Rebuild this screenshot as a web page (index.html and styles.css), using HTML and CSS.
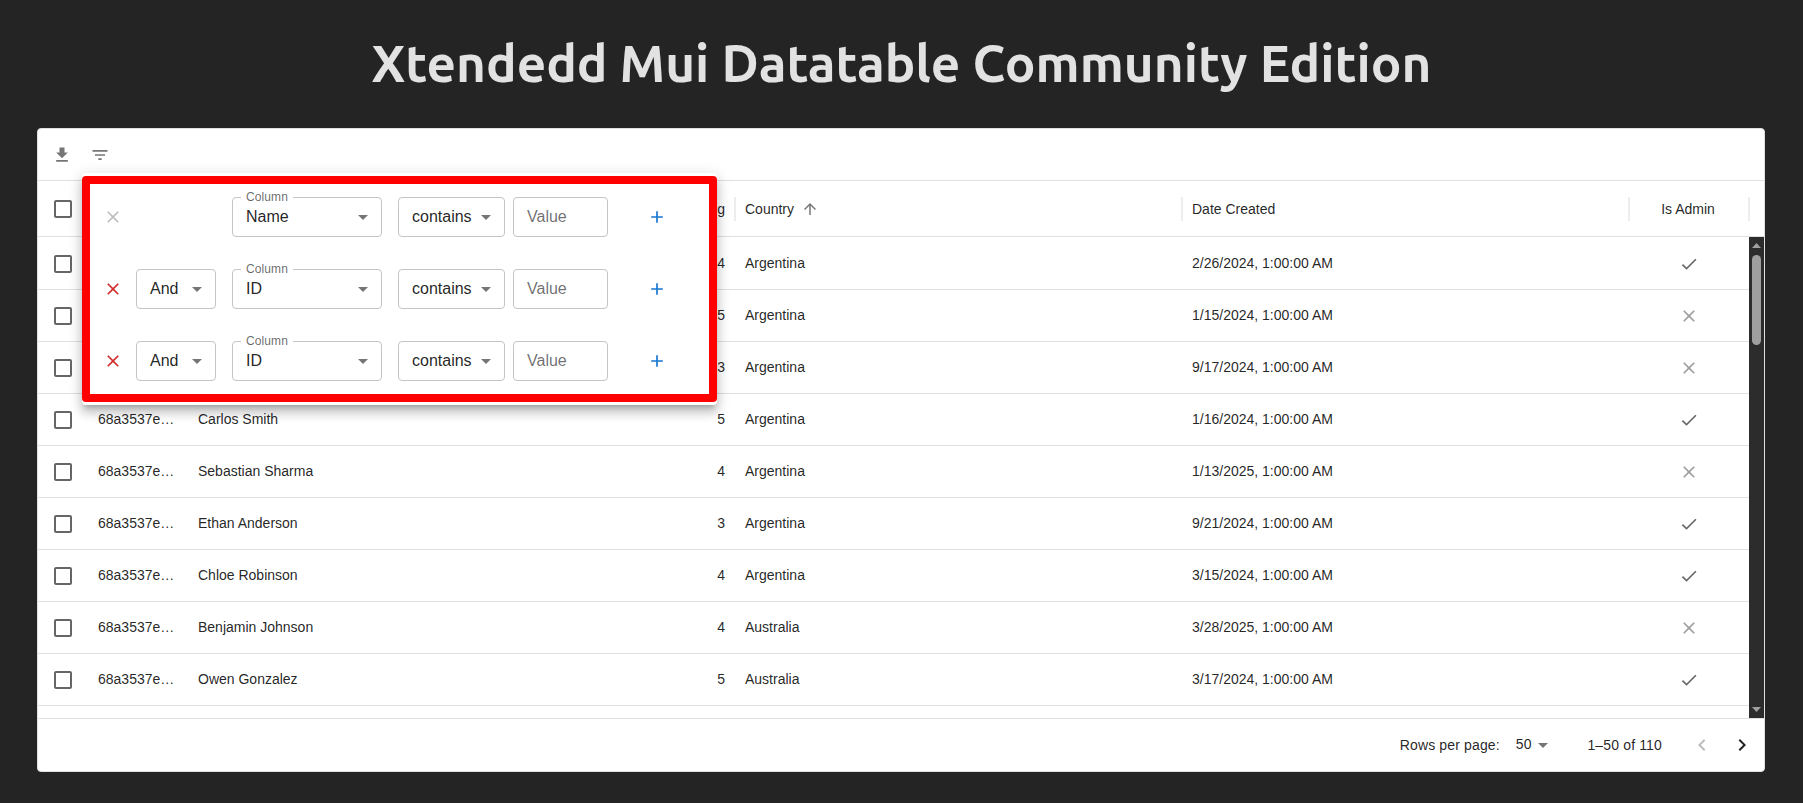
FILE: index.html
```html
<!DOCTYPE html>
<html lang="en">
<head>
<meta charset="utf-8">
<title>Xtendedd Mui Datatable</title>
<link rel="stylesheet" href="styles.css">
</head>
<body>
<svg class="defs" aria-hidden="true">
  <symbol id="box" viewBox="0 0 24 24"><path d="M19 5v14H5V5h14m0-2H5c-1.1 0-2 .9-2 2v14c0 1.1.9 2 2 2h14c1.1 0 2-.9 2-2V5c0-1.1-.9-2-2-2z"/></symbol>
  <symbol id="close" viewBox="0 0 24 24"><path d="M19 6.41L17.59 5 12 10.59 6.41 5 5 6.41 10.59 12 5 17.59 6.41 19 12 13.41 17.59 19 19 17.59 13.41 12z"/></symbol>
  <symbol id="check" viewBox="0 0 24 24"><path d="M9 16.17L4.83 12l-1.42 1.41L9 19 21 7l-1.41-1.41z"/></symbol>
  <symbol id="plus" viewBox="0 0 24 24"><path d="M19 13h-6v6h-2v-6H5v-2h6V5h2v6h6v2z"/></symbol>
  <symbol id="caret" viewBox="0 0 24 24"><path d="M7 10l5 5 5-5z"/></symbol>
</svg>
<h1 class="title">Xtendedd Mui Datatable Community Edition</h1>
<main class="grid">
  <div class="toolbar">
    <svg class="icon" viewBox="0 0 24 24"><path d="M19 9h-4V3H9v6H5l7 7 7-7zM5 18v2h14v-2H5z"/></svg>
    <svg class="icon" viewBox="0 0 24 24"><path d="M10 18h4v-2h-4v2zM3 6v2h18V6H3zm3 7h12v-2H6v2z"/></svg>
  </div>
  <div class="row head">
    <div class="c-box"><svg><use href="#box"/></svg></div>
    <div class="c-id"></div><div class="c-name"></div><div class="c-num sep">g</div>
    <div class="c-country sep">Country<svg class="sort" viewBox="0 0 24 24"><path d="M4 12l1.41 1.41L11 7.83V20h2V7.83l5.58 5.59L20 12l-8-8-8 8z"/></svg></div>
    <div class="c-date sep">Date Created</div><div class="c-admin sep">Is Admin</div>
  </div>
  <div class="body">
    <div class="rows">
      <div class="row first"><div class="c-box"><svg><use href="#box"/></svg></div><div class="c-id"></div><div class="c-name"></div><div class="c-num">4</div><div class="c-country">Argentina</div><div class="c-date">2/26/2024, 1:00:00 AM</div><div class="c-admin"><svg class="yes"><use href="#check"/></svg></div></div>
      <div class="row"><div class="c-box"><svg><use href="#box"/></svg></div><div class="c-id"></div><div class="c-name"></div><div class="c-num">5</div><div class="c-country">Argentina</div><div class="c-date">1/15/2024, 1:00:00 AM</div><div class="c-admin"><svg class="no"><use href="#close"/></svg></div></div>
      <div class="row"><div class="c-box"><svg><use href="#box"/></svg></div><div class="c-id"></div><div class="c-name"></div><div class="c-num">3</div><div class="c-country">Argentina</div><div class="c-date">9/17/2024, 1:00:00 AM</div><div class="c-admin"><svg class="no"><use href="#close"/></svg></div></div>
      <div class="row"><div class="c-box"><svg><use href="#box"/></svg></div><div class="c-id">68a3537e…</div><div class="c-name">Carlos Smith</div><div class="c-num">5</div><div class="c-country">Argentina</div><div class="c-date">1/16/2024, 1:00:00 AM</div><div class="c-admin"><svg class="yes"><use href="#check"/></svg></div></div>
      <div class="row"><div class="c-box"><svg><use href="#box"/></svg></div><div class="c-id">68a3537e…</div><div class="c-name">Sebastian Sharma</div><div class="c-num">4</div><div class="c-country">Argentina</div><div class="c-date">1/13/2025, 1:00:00 AM</div><div class="c-admin"><svg class="no"><use href="#close"/></svg></div></div>
      <div class="row"><div class="c-box"><svg><use href="#box"/></svg></div><div class="c-id">68a3537e…</div><div class="c-name">Ethan Anderson</div><div class="c-num">3</div><div class="c-country">Argentina</div><div class="c-date">9/21/2024, 1:00:00 AM</div><div class="c-admin"><svg class="yes"><use href="#check"/></svg></div></div>
      <div class="row"><div class="c-box"><svg><use href="#box"/></svg></div><div class="c-id">68a3537e…</div><div class="c-name">Chloe Robinson</div><div class="c-num">4</div><div class="c-country">Argentina</div><div class="c-date">3/15/2024, 1:00:00 AM</div><div class="c-admin"><svg class="yes"><use href="#check"/></svg></div></div>
      <div class="row"><div class="c-box"><svg><use href="#box"/></svg></div><div class="c-id">68a3537e…</div><div class="c-name">Benjamin Johnson</div><div class="c-num">4</div><div class="c-country">Australia</div><div class="c-date">3/28/2025, 1:00:00 AM</div><div class="c-admin"><svg class="no"><use href="#close"/></svg></div></div>
      <div class="row"><div class="c-box"><svg><use href="#box"/></svg></div><div class="c-id">68a3537e…</div><div class="c-name">Owen Gonzalez</div><div class="c-num">5</div><div class="c-country">Australia</div><div class="c-date">3/17/2024, 1:00:00 AM</div><div class="c-admin"><svg class="yes"><use href="#check"/></svg></div></div>
    </div>
    <div class="scroll">
      <svg class="tri" viewBox="0 0 9 5"><path d="M0 5L4.5 0 9 5z"/></svg>
      <div class="thumb"></div>
      <svg class="tri end" viewBox="0 0 9 5"><path d="M0 0L4.5 5 9 0z"/></svg>
    </div>
  </div>
  <div class="footer">
    <span class="per">Rows per page:</span>
    <span class="size">50</span><svg class="caret"><use href="#caret"/></svg>
    <span class="range">1–50 of 110</span>
    <svg class="nav off" viewBox="0 0 24 24"><path d="M15.41 16.59L10.83 12l4.58-4.59L14 6l-6 6 6 6 1.41-1.41z"/></svg>
    <svg class="nav" viewBox="0 0 24 24"><path d="M8.59 16.59L13.17 12 8.59 7.41 10 6l6 6-6 6-1.41-1.41z"/></svg>
  </div>
  <section class="popover">
    <div class="filters">
      <div class="filter">
        <svg class="del off"><use href="#close"/></svg>
        <div class="field op hidden"></div>
        <div class="field col"><span class="label">Column</span>Name<svg><use href="#caret"/></svg></div>
        <div class="field cmp">contains<svg><use href="#caret"/></svg></div>
        <div class="field val">Value</div>
        <svg class="add"><use href="#plus"/></svg>
      </div>
      <div class="filter">
        <svg class="del"><use href="#close"/></svg>
        <div class="field op">And<svg><use href="#caret"/></svg></div>
        <div class="field col"><span class="label">Column</span>ID<svg><use href="#caret"/></svg></div>
        <div class="field cmp">contains<svg><use href="#caret"/></svg></div>
        <div class="field val">Value</div>
        <svg class="add"><use href="#plus"/></svg>
      </div>
      <div class="filter">
        <svg class="del"><use href="#close"/></svg>
        <div class="field op">And<svg><use href="#caret"/></svg></div>
        <div class="field col"><span class="label">Column</span>ID<svg><use href="#caret"/></svg></div>
        <div class="field cmp">contains<svg><use href="#caret"/></svg></div>
        <div class="field val">Value</div>
        <svg class="add"><use href="#plus"/></svg>
      </div>
    </div>
  </section>
</main>
</body>
</html>
```
FILE: styles.css
```css
* { box-sizing: border-box; }
body { margin: 0; height: 803px; overflow: hidden; background: #242424; font: 14px/20px "Liberation Sans", Arial, sans-serif; color: rgba(0,0,0,.87); }
svg { fill: currentColor; flex: none; display: block; }
.defs { width: 0; height: 0; position: absolute; }
.title { margin: 0; height: 128px; text-align: center; font: 600 51.2px/126px "Ubuntu", "Noto Sans", sans-serif; color: rgba(255,255,255,.87); white-space: nowrap; }
.grid { position: relative; width: 1728px; height: 644px; margin-left: 37px; background: #fff; border: 1px solid #e0e0e0; border-radius: 4px; display: flex; flex-direction: column; }
.toolbar { height: 52px; flex: none; display: flex; gap: 18px; align-items: center; padding: 0 14px; border-bottom: 1px solid #e0e0e0; color: rgba(0,0,0,.54); }
.icon { width: 20px; height: 20px; }
.row { display: flex; height: 52px; flex: none; border-bottom: 1px solid #e0e0e0; align-items: center; padding-bottom: 1px; }
.row > div { padding: 0 10px; white-space: nowrap; }
.row.first { height: 53px; padding-bottom: 0; }
.row.head { height: 56px; padding-bottom: 0; }
.row > .c-box { width: 50px; padding: 2px 0 0 13px; color: rgba(0,0,0,.6); }
.row.head > .c-box { padding-top: 1px; }
.c-box svg { width: 24px; height: 24px; }
.c-id { width: 100px; }
.c-name { width: 447px; }
.c-num { width: 100px; text-align: right; }
.c-country, .c-date { width: 447px; }
.c-country { display: flex; align-items: center; }
.c-admin { width: 120px; display: flex; justify-content: center; }
.c-admin svg { width: 20px; height: 20px; margin-top: 2px; }
.yes { color: rgba(0,0,0,.6); }
.no { color: rgba(0,0,0,.38); }
.sep { height: 24px; line-height: 24px; border-right: 2px solid #ededed; margin-right: -1px; margin-left: 1px; }
.row > .sep { padding: 0 9px; }
.row > .c-admin.sep { padding-right: 11px; }
.sort { width: 18px; height: 18px; margin-left: 7px; color: rgba(0,0,0,.54); }
.body { display: flex; height: 481px; flex: none; overflow: hidden; }
.rows { width: 1711px; }
.scroll { width: 15px; background: #2c2c2c; display: flex; flex-direction: column; align-items: center; padding: 6px 0; color: #9f9f9f; }
.tri { width: 9px; height: 5px; }
.end { margin-top: auto; }
.thumb { width: 9px; height: 90px; border-radius: 5px; background: #9f9f9f; margin-top: 7px; }
.footer { flex: 1; border-top: 1px solid #e0e0e0; display: flex; align-items: center; justify-content: flex-end; padding-right: 10px; }
.per, .range { letter-spacing: .15px; }
.size { margin: 0 0 2px 16px; }
.caret { width: 24px; height: 24px; color: rgba(0,0,0,.54); }
.range { margin: 0 28px 0 32px; }
.nav { width: 24px; height: 24px; }
.nav.off { color: rgba(0,0,0,.26); margin-right: 16px; }
.popover { position: absolute; left: 44px; top: 44px; width: 635px; height: 232px; padding: 3px 0; background: #fff; border-radius: 4px; box-shadow: 0 5px 5px -3px rgba(0,0,0,.2), 0 8px 10px 1px rgba(0,0,0,.14), 0 3px 14px 2px rgba(0,0,0,.12); }
.filters { height: 226px; border: 8px solid #f00; border-radius: 4px; padding: 13px 0 0 13px; display: flex; flex-direction: column; gap: 32px; }
.filter { display: flex; height: 40px; align-items: center; font-size: 16px; }
.del { width: 20px; height: 20px; color: #d32f2f; margin-right: 13px; }
.del.off { color: rgba(0,0,0,.26); }
.field { position: relative; height: 40px; border: 1px solid #c4c4c4; border-radius: 4px; padding: 0 0 0 13px; display: flex; align-items: center; }
.field.hidden { visibility: hidden; }
.field svg { width: 24px; height: 24px; margin-left: auto; margin-right: 6px; color: rgba(0,0,0,.54); }
.op { width: 80px; margin-right: 16px; }
.col { width: 150px; margin-right: 16px; }
.cmp { width: 107px; margin-right: 8px; }
.val { width: 95px; color: rgba(0,0,0,.58); margin-right: 39px; }
.label { position: absolute; left: 8px; top: -9px; padding: 0 5px; background: #fff; font-size: 12px; line-height: 16px; letter-spacing: .1px; color: rgba(0,0,0,.6); }
.add { width: 20px; height: 20px; color: #1976d2; }
```
